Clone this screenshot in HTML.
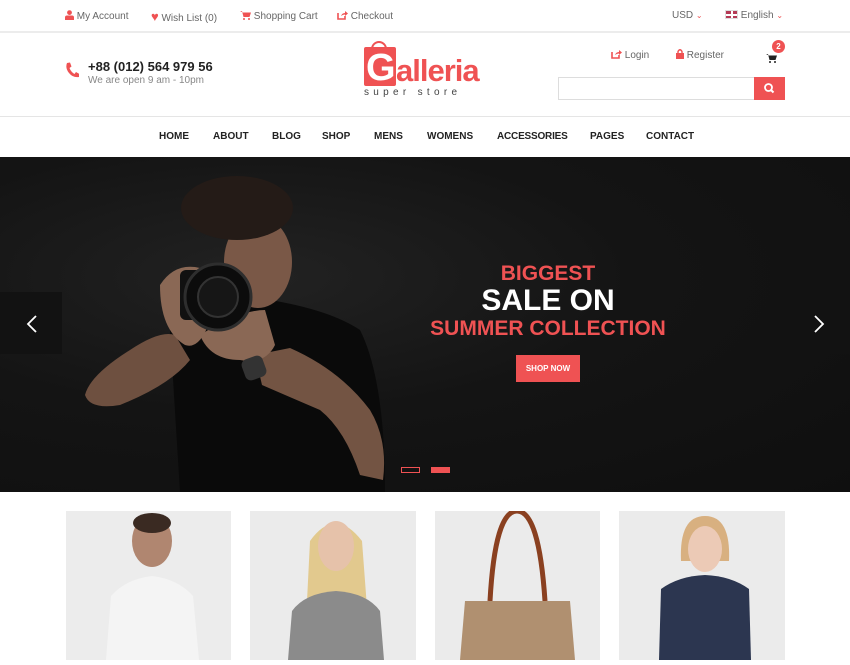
<!DOCTYPE html>
<html><head><meta charset="utf-8"><style>
*{margin:0;padding:0;box-sizing:border-box}
body{width:850px;height:660px;overflow:hidden;background:#fff;font-family:"Liberation Sans",sans-serif;color:#555;position:relative}
.a{position:absolute;white-space:nowrap}
.top{font-size:10px;color:#666}
.red{color:#ef5253}
.nav{font-size:10px;font-weight:bold;color:#222;top:131px}
</style></head><body>
<!-- top bar -->
<div class="a" style="left:0;top:31px;width:850px;height:2px;background:#ececec"></div>
<div class="a top" style="left:65px;top:10px"><svg width="9" height="10" viewBox="0 0 9 10" style="vertical-align:-1px"><circle cx="4.5" cy="2.6" r="2.4" fill="#ef5253"/><path d="M0 10V7.5Q0 5.5 2 5.5H7Q9 5.5 9 7.5V10Z" fill="#ef5253"/></svg> My Account</div>
<div class="a top" style="left:151px;top:9px"><span class="red" style="font-size:13px">♥</span> Wish List (0)</div>
<div class="a top" style="left:240px;top:10px"><svg width="11" height="10" viewBox="0 0 11 10" style="vertical-align:-1px"><path d="M0 1H2L3.5 7H9.5L11 2.5H3" fill="#ef5253"/><circle cx="4" cy="9" r="1" fill="#ef5253"/><circle cx="9" cy="9" r="1" fill="#ef5253"/></svg> Shopping Cart</div>
<div class="a top" style="left:337px;top:10px"><svg width="11" height="10" viewBox="0 0 11 10" style="vertical-align:-1px"><path d="M1 3V9H8V6" stroke="#ef5253" stroke-width="1.6" fill="none"/><path d="M4 6Q5 3 8 3V1L11 3.5L8 6V4.5Q6 4.5 4 6" fill="#ef5253"/></svg> Checkout</div>
<div class="a top" style="left:672px;top:10px">USD <span class="red" style="font-size:8px">⌄</span></div>
<div class="a top" style="left:725px;top:10px"><span style="display:inline-block;width:13px;height:9px;border:1px solid #ddd;vertical-align:-1px;background:linear-gradient(#fff,#fff) center/13px 2px no-repeat,linear-gradient(#fff,#fff) center/2px 9px no-repeat,#b43a55"></span> English <span class="red" style="font-size:8px">⌄</span></div>

<!-- header -->
<div class="a" style="left:65px;top:62px"><svg width="14" height="16" viewBox="0 0 14 16"><path d="M2 1L5 0.5L6.5 4.5L4.5 6Q6 10 9.5 12L11 10L14.5 12L14 15Q8 16 4 11Q0 6 2 1Z" fill="#ef5253"/></svg></div>
<div class="a" style="left:88px;top:59px;font-size:13px;font-weight:bold;color:#222">+88 (012) 564 979 56</div>
<div class="a" style="left:88px;top:75px;font-size:10px;color:#888">We are open 9 am - 10pm</div>
<!-- logo -->
<div class="a" style="left:364px;top:47px;width:32px;height:39px;background:#ef5253;border-radius:2px"></div>
<div class="a" style="left:371px;top:41px;width:16px;height:14px;border:2px solid #ef5253;border-bottom:none;border-radius:8px 8px 0 0"></div>
<div class="a" style="left:366px;top:46px;font-size:38px;color:#fff;font-weight:bold;line-height:44px">G</div>
<div class="a" style="left:396px;top:53px;font-size:31px;color:#ef5253;font-weight:bold;line-height:36px;letter-spacing:-1px">alleria</div>
<div class="a" style="left:364px;top:87px;font-size:10px;color:#444;letter-spacing:4.3px">super store</div>
<!-- login etc -->
<div class="a top" style="left:611px;top:49px"><svg width="11" height="10" viewBox="0 0 11 10" style="vertical-align:-1px"><path d="M1 3V9H8V6" stroke="#ef5253" stroke-width="1.6" fill="none"/><path d="M4 6Q5 3 8 3V1L11 3.5L8 6V4.5Q6 4.5 4 6" fill="#ef5253"/></svg> Login</div>
<div class="a top" style="left:676px;top:49px"><svg width="8" height="10" viewBox="0 0 8 10" style="vertical-align:-1px"><path d="M2 4V2.5Q4-1 6 2.5V4" stroke="#ef5253" stroke-width="1.4" fill="none"/><rect y="4" width="8" height="6" fill="#ef5253"/></svg> Register</div>
<div class="a" style="left:766px;top:50px"><svg width="11" height="10" viewBox="0 0 11 10"><path d="M0 1H2L3.5 7H9.5L11 2.5H3" fill="#222"/><circle cx="4" cy="9" r="1" fill="#222"/><circle cx="9" cy="9" r="1" fill="#222"/></svg></div>
<div class="a" style="left:772px;top:40px;width:13px;height:13px;border-radius:50%;background:#ef5253;color:#fff;font-size:8px;font-weight:bold;text-align:center;line-height:13px">2</div>
<div class="a" style="left:558px;top:77px;width:197px;height:23px;border:1px solid #ddd;border-right:none"></div>
<div class="a" style="left:754px;top:77px;width:31px;height:23px;background:#ef5253"><svg width="31" height="23" viewBox="0 0 31 23"><circle cx="14.5" cy="10.5" r="3.5" stroke="#fff" stroke-width="1.8" fill="none"/><path d="M17 13L19.5 15.5" stroke="#fff" stroke-width="2"/></svg></div>

<div class="a" style="left:0;top:116px;width:850px;height:1px;background:#e5e5e5"></div>
<div class="a nav" style="left:159px">HOME</div>
<div class="a nav" style="left:213px">ABOUT</div>
<div class="a nav" style="left:272px">BLOG</div>
<div class="a nav" style="left:322px">SHOP</div>
<div class="a nav" style="left:374px">MENS</div>
<div class="a nav" style="left:427px">WOMENS</div>
<div class="a nav" style="left:497px;letter-spacing:-0.2px">ACCESSORIES</div>
<div class="a nav" style="left:590px">PAGES</div>
<div class="a nav" style="left:646px">CONTACT</div>

<!-- hero -->
<div class="a" style="left:0;top:157px;width:850px;height:335px;background:radial-gradient(ellipse at 260px 120px,#222 0%,#141414 45%,#0f0f0f 100%);overflow:hidden">
<svg width="850" height="335" viewBox="0 157 850 335" style="position:absolute;left:0;top:0">
<path d="M170 330Q200 310 270 300Q330 310 360 330Q385 380 385 492H180Z" fill="#0a0a0a"/>
<path d="M85 395Q90 375 130 350Q160 330 175 335L190 360Q170 385 120 405Q90 410 85 395Z" fill="#6e5040"/>
<path d="M255 355L290 348Q340 370 370 410Q388 440 383 480L360 475Q345 430 320 410Q285 395 262 385Z" fill="#735443"/>
<ellipse cx="258" cy="262" rx="34" ry="46" fill="#7a5847"/>
<ellipse cx="237" cy="208" rx="56" ry="32" fill="#241b17"/>
<path d="M160 285Q175 262 200 268L210 320Q200 350 185 345Q160 330 160 285Z" fill="#8a6855"/>
<path d="M200 335Q240 310 265 310L275 345Q265 365 240 360Q210 360 200 335Z" fill="#8a6855"/>
<rect x="180" y="270" width="45" height="50" rx="6" fill="#111"/>
<circle cx="218" cy="297" r="33" fill="#0c0c0c" stroke="#2e2e2e" stroke-width="3"/>
<circle cx="218" cy="297" r="20" fill="#161616" stroke="#333" stroke-width="2"/>
<rect x="243" y="357" width="22" height="22" rx="6" fill="#333" transform="rotate(-20 254 368)"/>
</svg>
<div class="a" style="left:0;top:135px;width:62px;height:62px;background:#121212"></div>
<div class="a" style="left:788px;top:135px;width:62px;height:62px;background:#121212"></div>
<svg class="a" style="left:26px;top:158px" width="12" height="18" viewBox="0 0 12 18"><path d="M10 1L2 9L10 17" stroke="#fff" stroke-width="1.8" fill="none"/></svg>
<svg class="a" style="left:813px;top:158px" width="12" height="18" viewBox="0 0 12 18"><path d="M2 1L10 9L2 17" stroke="#fff" stroke-width="1.8" fill="none"/></svg>
<div class="a" style="left:400px;top:105px;width:296px;text-align:center;font-size:21px;font-weight:bold;color:#ef5253">BIGGEST</div>
<div class="a" style="left:400px;top:127px;width:296px;text-align:center;font-size:30px;font-weight:bold;color:#fff">SALE ON</div>
<div class="a" style="left:400px;top:160px;width:296px;text-align:center;font-size:21px;font-weight:bold;color:#ef5253">SUMMER COLLECTION</div>
<div class="a" style="left:516px;top:198px;width:64px;height:27px;background:#ef5253;color:#fff;font-size:8px;font-weight:bold;text-align:center;line-height:27px">SHOP NOW</div>
<div class="a" style="left:401px;top:310px;width:19px;height:6px;border:1px solid #ef5253"></div>
<div class="a" style="left:431px;top:310px;width:19px;height:6px;background:#ef5253"></div>
</div>

<!-- products -->
<div class="a" style="left:66px;top:511px;width:165px;height:149px;background:#ececec"><svg width="165" height="149"><ellipse cx="86" cy="30" rx="20" ry="26" fill="#b08670"/><ellipse cx="86" cy="12" rx="19" ry="10" fill="#3a2a22"/><path d="M40 149L45 85Q60 68 86 65Q112 68 127 85L133 149Z" fill="#f4f4f4"/></svg></div>
<div class="a" style="left:250px;top:511px;width:166px;height:149px;background:#ebebeb"><svg width="166" height="149"><path d="M60 30Q85 -5 112 30L118 110H56Z" fill="#e2c98e"/><ellipse cx="86" cy="35" rx="18" ry="25" fill="#e6c2aa"/><path d="M38 149L42 100Q55 82 86 80Q117 82 130 100L134 149Z" fill="#8b8b8b"/></svg></div>
<div class="a" style="left:435px;top:511px;width:165px;height:149px;background:#ebebeb"><svg width="165" height="149"><path d="M55 90Q60 0 82 0Q104 0 110 90" stroke="#8a4020" stroke-width="5" fill="none"/><path d="M25 149L30 90H135L140 149Z" fill="#b09070"/></svg></div>
<div class="a" style="left:619px;top:511px;width:166px;height:149px;background:#ebebeb"><svg width="166" height="149"><path d="M62 50Q60 5 86 5Q112 5 110 50Z" fill="#d8b080"/><ellipse cx="86" cy="38" rx="17" ry="23" fill="#eccab6"/><path d="M40 149L42 78Q60 65 86 64Q112 65 130 78L132 149Z" fill="#2c3650"/></svg></div>
</body></html>
